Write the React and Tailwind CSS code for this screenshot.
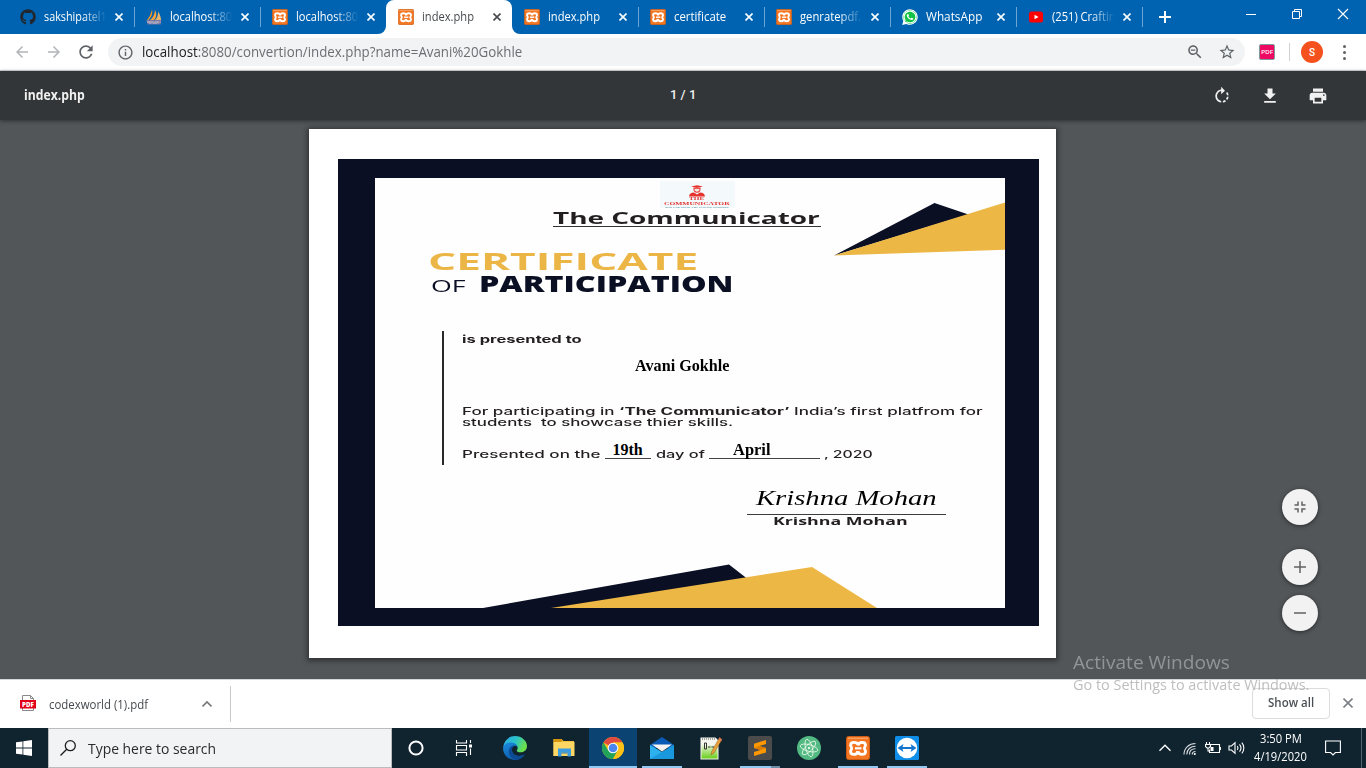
import { useLayoutEffect, useRef, useState } from "react";
import { FaGithub, FaWhatsapp } from "react-icons/fa";

/* Stretches one line of text so that it fills the width given in className. */
function Fit({ className = "", children }) {
  const outer = useRef(null);
  const inner = useRef(null);
  const [scale, setScale] = useState(1);
  useLayoutEffect(() => {
    setScale(outer.current.clientWidth / inner.current.offsetWidth);
  }, [children]);
  return (
    <span ref={outer} className={`inline-block shrink-0 whitespace-pre ${className}`}>
      <span ref={inner} className="inline-block origin-left" style={{ transform: `scaleX(${scale})` }}>
        {children}
      </span>
    </span>
  );
}

function Glyph({ d, className }) {
  return (
    <svg viewBox="0 0 24 24" className={className} fill="currentColor">
      <path d={d} />
    </svg>
  );
}

const ICONS = {
  back: "M20 11H7.83l5.59-5.59L12 4l-8 8 8 8 1.41-1.41L7.83 13H20v-2z",
  forward: "M12 4l-1.41 1.41L16.17 11H4v2h12.17l-5.58 5.59L12 20l8-8z",
  reload:
    "M17.65 6.35C16.2 4.9 14.21 4 12 4c-4.42 0-7.99 3.58-7.99 8s3.57 8 7.99 8c3.73 0 6.84-2.55 7.73-6h-2.08c-.82 2.33-3.04 4-5.65 4-3.31 0-6-2.69-6-6s2.69-6 6-6c1.66 0 3.14.69 4.22 1.78L13 11h7V4l-2.35 2.35z",
  info: "M11 17h2v-6h-2v6zm1-15C6.48 2 2 6.48 2 12s4.48 10 10 10 10-4.48 10-10S17.52 2 12 2zm0 18c-4.41 0-8-3.59-8-8s3.59-8 8-8 8 3.59 8 8-3.59 8-8 8zM11 9h2V7h-2v2z",
  zoomOut:
    "M15.5 14h-.79l-.28-.27C15.41 12.59 16 11.11 16 9.5 16 5.91 13.09 3 9.5 3S3 5.91 3 9.5 5.91 16 9.5 16c1.61 0 3.09-.59 4.23-1.57l.27.28v.79l5 4.99L20.49 19l-4.99-5zm-6 0C7.01 14 5 11.99 5 9.5S7.01 5 9.5 5 14 7.01 14 9.5 11.99 14 9.5 14zM6.5 8.7h6v1.6h-6z",
  star: "M22 9.24l-7.19-.62L12 2 9.19 8.63 2 9.24l5.46 4.73L5.82 21 12 17.27 18.18 21l-1.63-7.03L22 9.24zM12 15.4l-3.76 2.27 1-4.28-3.32-2.88 4.38-.38L12 6.1l1.71 4.04 4.38.38-3.32 2.88 1 4.28L12 15.4z",
  rotate:
    "M15.55 5.55L11 1v3.07C7.06 4.56 4 7.92 4 12s3.05 7.44 7 7.93v-2.02c-2.84-.48-5-2.94-5-5.91s2.16-5.43 5-5.91V10l4.55-4.45zM19.93 11c-.17-1.39-.72-2.73-1.62-3.89l-1.42 1.42c.54.75.88 1.6 1.02 2.47h2.02zM13 17.9v2.02c1.39-.17 2.74-.71 3.9-1.61l-1.44-1.44c-.75.54-1.59.89-2.46 1.03zm3.89-2.42l1.42 1.41c.9-1.16 1.45-2.5 1.62-3.89h-2.02c-.14.87-.48 1.72-1.02 2.48z",
  download: "M19 9h-4V3H9v6H5l7 7 7-7zM5 18v2h14v-2H5z",
  print:
    "M19 8H5c-1.66 0-3 1.34-3 3v6h4v4h12v-4h4v-6c0-1.66-1.34-3-3-3zm-3 11H8v-5h8v5zm3-7c-.55 0-1-.45-1-1s.45-1 1-1 1 .45 1 1-.45 1-1 1zm-1-9H6v4h12V3z",
};

function Xampp({ className }) {
  return (
    <svg viewBox="0 0 24 24" className={className}>
      <rect x="0.5" y="0.5" width="23" height="23" rx="2" fill="#f37623" stroke="#cf5c12" />
      <path d="M2 2.2h20" stroke="#f9b27c" strokeWidth="1" />
      <path
        d="M12.200 9.500C12 7.200 10.300 6.300 8 6.300 5.700 6.300 4.600 7.500 4.600 9.200c0 1.500 1.100 1.700 1.100 3.100s-1.100 1.700-1.100 3.200c0 1.700 1.200 2.900 3.400 2.900 2.300 0 3.400-1 3.900-3.300M12.200 9.500c.3-2.300 1.600-3.200 3.900-3.200s3.400 1.200 3.400 2.900c0 1.500-1.100 1.700-1.100 3.100s1.100 1.700 1.100 3.200c0 1.700-1.200 2.900-3.400 2.900-2.300 0-3.800-1-4.100-3.300"
        fill="none"
        stroke="#fff"
        strokeWidth="2.800"
      />
      <path d="M9 12.300h6.500" stroke="#fff" strokeWidth="2.200" />
    </svg>
  );
}

function PhpMyAdmin() {
  return (
    <svg viewBox="0 0 16 16" className="size-4 shrink-0">
      <path d="M6 .5c.7 3 .4 7-3.700 10.500L1 11C3.500 8 5 4.500 6 .5z" fill="#f8971d" />
      <path d="M9 .8c1.800 3.700 1.800 7.700-1 10.200H4C7 8.500 9 5 9 .8z" fill="#f9a13a" />
      <path d="M12 2.500c2.200 3 3 6.500 3 8.500H9c2.300-2 3.300-5.500 3-8.500z" fill="#e8b469" />
      <path d="M.5 11h15l-.8 4.500H1.500z" fill="#77769f" />
      <path d="M1 13h2m1-1v3m2-3v2.500m2-2v2.500m2-3v3m2-3v2.500m1.500-1.500h1" stroke="#e5e2ec" strokeWidth=".8" />
    </svg>
  );
}

function WhatsApp() {
  return (
    <svg viewBox="0 0 16 16" className="size-4 shrink-0">
      <path d="M8 .2a7.800 7.800 0 1 1-3.700 14.700L.2 15.900l1.100-4A7.800 7.800 0 0 1 8 .2z" fill="#fff" />
      <circle cx="8" cy="8" r="6.700" fill="#13c345" />
      <g transform="translate(8 8) scale(.92) translate(-8 -8)">
        <FaWhatsapp size={16} color="#fff" />
      </g>
    </svg>
  );
}

function YouTube() {
  return (
    <svg viewBox="0 0 16 16" className="size-4 shrink-0">
      <rect x="1" y="2.500" width="14" height="11" rx="2.500" fill="#f00" />
      <path d="M6.500 5.700v4.600l4-2.300z" fill="#fff" />
    </svg>
  );
}

function CloseX({ className }) {
  return (
    <svg viewBox="0 0 8 8" className={className}>
      <path d="M.5.5l7 7M7.500.5l-7 7" stroke="currentColor" strokeWidth="1.600" />
    </svg>
  );
}

const tabXampp = <Xampp className="size-4 shrink-0" />;

const TABS = [
  {
    icon: <FaGithub className="size-4 shrink-0 text-[#20272e]" />,
    title: "sakshipatel1",
    w: "w-[63px]",
    fade: true,
    sep: true,
  },
  { icon: <PhpMyAdmin />, title: "localhost:80", w: "w-[62px]", fade: true, sep: true },
  { icon: tabXampp, title: "localhost:80", w: "w-[62px]", fade: true },
  { icon: tabXampp, title: "index.php", w: "w-[52px]", active: true },
  { icon: tabXampp, title: "index.php", w: "w-[52px]", sep: true },
  { icon: tabXampp, title: "certificate", w: "w-[52px]", sep: true },
  { icon: tabXampp, title: "genratepdf.", w: "w-[61px]", fade: true, sep: true },
  { icon: <WhatsApp />, title: "WhatsApp", w: "w-[56px]", sep: true },
  { icon: <YouTube />, title: "(251) Craftin", w: "w-[64px]", fade: true, sep: true },
];

function Tab({ tab }) {
  return (
    <div
      className={`relative flex h-[34px] w-[126px] shrink-0 items-center pl-3 ${
        tab.active ? "z-10 rounded-t-lg bg-white text-[#45494d]" : "text-white"
      }`}
    >
      {tab.active && (
        <>
          <svg viewBox="0 0 8 8" className="absolute bottom-0 -left-2 size-2" fill="#fff">
            <path d="M8 0v8H0a8 8 0 0 0 8-8z" />
          </svg>
          <svg viewBox="0 0 8 8" className="absolute -right-2 bottom-0 size-2" fill="#fff">
            <path d="M0 0v8h8a8 8 0 0 1-8-8z" />
          </svg>
        </>
      )}
      {tab.icon}
      <span
        className={`ml-2 w-16 shrink-0 overflow-hidden text-[12px] leading-[18px] ${
          tab.fade ? "mask-r-from-60% mask-r-to-98%" : ""
        }`}
      >
        <Fit className={tab.w}>{tab.title}</Fit>
      </span>
      <CloseX className="ml-[7px] size-2 shrink-0" />
      {tab.sep && <span className="ml-[11px] h-5 w-px shrink-0 bg-[#6ba5d5]" />}
    </div>
  );
}

function TabStrip() {
  return (
    <div className="flex h-[34px] bg-[#0063b1] pl-2 text-white">
      {TABS.map((tab, i) => (
        <Tab key={i} tab={tab} />
      ))}
      <div className="flex flex-1 items-center">
        <svg viewBox="0 0 12 12" className="ml-[17px] size-3">
          <path d="M6 0v12M0 6h12" stroke="#fff" strokeWidth="2" />
        </svg>
        <svg viewBox="0 0 12 12" className="mb-1.5 ml-[74px] size-3">
          <path d="M1 6.500h10" stroke="#fff" />
        </svg>
        <svg viewBox="0 0 12 12" className="mb-1.5 ml-[34px] size-3" fill="none" stroke="#fff">
          <path d="M1.500 3.500h7v7h-7zM3.500 3.500v-2h7v7h-2" />
        </svg>
        <svg viewBox="0 0 12 12" className="mb-1.5 ml-[34px] size-3">
          <path d="M1 1l10 10M11 1L1 11" stroke="#fff" strokeWidth="1.100" />
        </svg>
      </div>
    </div>
  );
}

function AddressBar() {
  return (
    <div className="flex h-[37px] items-center border-b border-[#d5d7da] bg-white text-[#5f6368]">
      <Glyph d={ICONS.back} className="ml-[13px] size-[18px] text-[#b2b4b7]" />
      <Glyph d={ICONS.forward} className="ml-[14px] size-[18px] text-[#b2b4b7]" />
      <Glyph d={ICONS.reload} className="ml-[13px] size-5" />
      <div className="ml-3 flex h-7 w-[1137px] items-center rounded-full bg-[#f1f3f4] pl-[9px]">
        <Glyph d={ICONS.info} className="size-[17px]" />
        <Fit className="ml-2 w-[380px] text-[14px] leading-5 text-[#6b6f73]">
          <span className="text-[#202124]">localhost</span>:8080/convertion/index.php?name=Avani%20Gokhle
        </Fit>
        <span className="flex-1" />
        <Glyph d={ICONS.zoomOut} className="mr-[14px] size-[18px]" />
        <Glyph d={ICONS.star} className="mr-[9px] size-[18px]" />
      </div>
      <div className="ml-[14px] flex size-4 items-center justify-center overflow-hidden rounded-[2px] border border-[#7f9ba0] bg-[#ee0a63] text-[6px] leading-none font-semibold text-white">
        <Fit className="w-3">PDF</Fit>
      </div>
      <span className="ml-[14px] h-[18px] w-px bg-[#cfd1d4]" />
      <span className="ml-[11px] flex size-[22px] items-center justify-center rounded-full bg-[#f4511e] font-['Roboto'] text-[10px] font-medium text-white">
        S
      </span>
      <span className="ml-5 flex flex-col gap-[3px]">
        <i className="size-[3px] rounded-full bg-[#5f6368]" />
        <i className="size-[3px] rounded-full bg-[#5f6368]" />
        <i className="size-[3px] rounded-full bg-[#5f6368]" />
      </span>
    </div>
  );
}

function PdfToolbar() {
  return (
    <div className="relative z-10 grid h-[49px] grid-cols-3 items-center bg-[#323639] text-[#f1f1f1] shadow-[0_1px_4px_rgba(0,0,0,0.45)]">
      <Fit className="mb-0.5 ml-6 w-[61px] text-[14px] leading-5 font-bold">index.php</Fit>
      <Fit className="mb-0.5 w-[26px] justify-self-center font-['Roboto'] text-[13px] leading-5 font-medium">1 / 1</Fit>
      <div className="flex justify-end gap-7 pr-[38px]">
        <Glyph d={ICONS.rotate} className="size-5" />
        <Glyph d={ICONS.download} className="size-5" />
        <Glyph d={ICONS.print} className="size-5" />
      </div>
    </div>
  );
}

function CertificateLogo() {
  return (
    <div className="flex h-[27px] w-[75px] flex-col items-center bg-[#f4f9fc] pt-1 leading-none font-bold text-[#e0342f]">
      <svg viewBox="0 0 18 12" className="h-3 w-[18px] shrink-0" fill="#e6332d">
        <path d="M3 1.500L9 .2l6 1.300-6 1.300z" />
        <path d="M5.500 2.500h7v2c0 2-1.500 3.300-3.500 3.300S5.500 6.500 5.500 4.500z" />
        <path d="M6.500 3.800h5v.8c0 1.300-1 2.200-2.500 2.200S6.500 5.900 6.500 4.600z" fill="#fbe4e0" />
        <path d="M1 11.500c.3-2.700 2-3.800 5-4l3 2 3-2c3 .2 4.700 1.300 5 4z" />
      </svg>
      <Fit className="h-[4.500px] w-4 font-['Liberation_Serif'] text-[4.500px] leading-[4.500px]">THE</Fit>
      <Fit className="h-[4.500px] w-[66px] font-['Liberation_Serif'] text-[5px] leading-[4.500px]">COMMUNICATOR</Fit>
      <Fit className="h-[2px] w-[64px] text-[2.500px] leading-[2px] font-normal text-[#4f8f99]">
        The Platform For Future Leaders
      </Fit>
    </div>
  );
}

function Certificate() {
  return (
    <div className="mr-0.5 h-[529px] w-[747px] bg-white pt-[30px] pl-[29px] shadow-[0_1px_5px_2px_rgba(0,0,0,0.4)]">
      <div className="relative h-[467px] w-[701px] bg-[#0a0f24] pt-[19px] pl-[37px]">
        <div className="h-[430px] w-[630px] bg-[#fefefe]" />
        <svg viewBox="338 159 701 467" className="absolute inset-0 h-[467px] w-[701px]">
          <path d="M834 255.500L934.500 203l34 11.500z" fill="#0a0f24" />
          <path d="M834 255.500L1005 202.500v47.300z" fill="#edb745" />
          <path d="M483 608l246-43.500 18 14L600 608z" fill="#0a0f24" />
          <path d="M551 608l261-41 65 41z" fill="#edb745" />
        </svg>
        <div className="absolute top-[19px] left-[37px] flex h-[430px] w-[630px] flex-col pt-[3px] text-[#231f20]">
          <div className="ml-[285px] flex">
            <CertificateLogo />
          </div>
          <div className="ml-[178px] flex h-[19px] w-[268px] border-b border-[#333]">
            <Fit className="w-[267px] text-[16px] leading-[20px] font-bold">The Communicator</Fit>
          </div>
          <Fit className="mt-[23px] ml-[53px] h-[22px] w-[271px] text-[22.500px] leading-[23px] font-bold text-[#ecb646]">
            CERTIFICATE
          </Fit>
          <div className="ml-[56px] flex h-[22px] items-baseline leading-[22px] text-[#0a0f24]">
            <Fit className="w-[34px] text-[16.500px] font-medium">OF</Fit>
            <Fit className="ml-[14px] w-[255px] text-[23.500px] font-extrabold">PARTICIPATION</Fit>
          </div>
          <div className="mt-[37px] ml-[67px] flex h-[134px] flex-col border-l-2 border-[#2b2829] pt-[2px] pl-[18px] font-[Inter] text-[10px] leading-[13px] font-medium">
            <Fit className="h-3 w-[119px] font-bold">is presented to</Fit>
            <Fit className="mt-3 ml-[173px] h-[18px] w-[95px] font-['Liberation_Serif'] text-[16px] leading-[18px] font-bold text-black">
              Avani Gokhle
            </Fit>
            <Fit className="mt-[30px] h-[11px] w-[521px] leading-[12px]">
              For participating in <b>‘The Communicator’</b> India’s first platfrom for
            </Fit>
            <Fit className="h-[12px] w-[271px] leading-[13px]">{"students  to showcase thier skills."}</Fit>
            <div className="mt-[18px] flex items-end leading-3">
              <Fit className="-mb-px w-[138px]">Presented on the</Fit>
              <span className="ml-[5px] flex h-[13px] w-[46px] items-end justify-center border-b border-[#444] font-['Liberation_Serif'] text-[16px] leading-4 font-bold text-black">
                <Fit className="w-[30px]">19th</Fit>
              </span>
              <Fit className="-mb-px ml-[5px] w-[49px]">day of</Fit>
              <span className="ml-[4px] flex h-[13px] w-[111px] items-end border-b border-[#444] pl-6 font-['Liberation_Serif'] text-[16px] leading-4 font-bold text-black">
                <Fit className="w-[37px]">April</Fit>
              </span>
              <Fit className="-mb-px ml-1 w-[49px]">, 2020</Fit>
            </div>
          </div>
          <div className="mt-[19px] ml-[372px] flex w-[199px] flex-col">
            <div className="flex h-[31px] w-[199px] justify-center border-b border-[#3c3c3c]">
              <Fit className="w-[180px] font-['Z003','URW_Chancery_L','Liberation_Serif',cursive] text-[21px] leading-[28px] text-black italic">
                Krishna Mohan
              </Fit>
            </div>
            <Fit className="ml-[26px] w-[135px] text-[10px] leading-[13px] font-bold">Krishna Mohan</Fit>
          </div>
        </div>
      </div>
    </div>
  );
}

function RoundButton({ className = "", d }) {
  return (
    <span
      className={`flex size-9 items-center justify-center rounded-full bg-[#f2f2f2] shadow-[0_1px_4px_rgba(0,0,0,0.5)] ${className}`}
    >
      <svg viewBox="0 0 12 12" className="size-3" fill="none" stroke="#616161" strokeWidth="1.500">
        <path d={d} />
      </svg>
    </span>
  );
}

function Viewer() {
  return (
    <div className="relative flex h-[559px] justify-center bg-[#525659] pt-[9px]">
      <Certificate />
      <div className="absolute top-[369px] right-12 flex flex-col">
        <RoundButton d="M4 .5V4H.5M8 .5V4h3.500M4 11.500V8H.5M8 11.500V8h3.500" />
        <RoundButton className="mt-6" d="M6 0v12M0 6h12" />
        <RoundButton className="mt-[10px]" d="M0 6h12" />
      </div>
      <div className="absolute top-[530px] left-[1073px] z-20 flex flex-col text-[#a8a8a8]/75">
        <Fit className="w-[157px] text-[19px] leading-6">Activate Windows</Fit>
        <Fit className="w-[236px] text-[14px] leading-[22px]">Go to Settings to activate Windows.</Fit>
      </div>
    </div>
  );
}

function DownloadBar() {
  return (
    <div className="flex h-[49px] items-center border-t border-[#d5d7da] bg-white">
      <svg viewBox="0 0 16 16" className="mb-0.5 ml-5 size-4">
        <path d="M2.500 15.500V.5h8l3 3v12z" fill="#fff" stroke="#8b8b8b" />
        <path d="M10.500.5v3h3" fill="none" stroke="#8b8b8b" />
        <rect x="0" y="5" width="16" height="8.500" fill="#e2001a" />
        <text x="8" y="11.600" textAnchor="middle" fill="#fff" fontSize="6.200" fontWeight="800" fontFamily="Open Sans">
          PDF
        </text>
      </svg>
      <Fit className="mt-0.5 ml-[13px] w-[99px] text-[12px] leading-4 text-[#45494d]">codexworld (1).pdf</Fit>
      <svg viewBox="0 0 10 10" className="ml-[54px] size-[10px]" fill="none" stroke="#75797d" strokeWidth="1.600">
        <path d="M.5 7.500L5 3l4.500 4.500" />
      </svg>
      <span className="ml-[18px] h-9 w-px bg-[#c6c8ca]" />
      <span className="flex-1" />
      <button className="mb-0.5 flex h-[31px] w-[78px] items-center justify-center rounded-[4px] border border-[#dadce0] text-[12px] leading-4 font-semibold text-[#4b5054]">
        <Fit className="w-[46px]">Show all</Fit>
      </button>
      <svg viewBox="0 0 10 10" className="mr-[13px] mb-0.5 ml-[13px] size-[10px]" stroke="#7d8185" strokeWidth="1.600">
        <path d="M.5.5l9 9M9.500.5l-9 9" />
      </svg>
    </div>
  );
}

const EdgeIcon = (
  <svg viewBox="0 0 24 24" className="size-6">
    <defs>
      <linearGradient id="edgeTop" x1="0" y1="0" x2="1" y2="0.400">
        <stop offset="0" stopColor="#2aa8e8" />
        <stop offset="0.550" stopColor="#2cc3c9" />
        <stop offset="1" stopColor="#6be04a" />
      </linearGradient>
      <linearGradient id="edgeLow" x1="0" y1="0" x2="0.600" y2="1">
        <stop offset="0" stopColor="#1b8be0" />
        <stop offset="1" stopColor="#0c59a4" />
      </linearGradient>
    </defs>
    <path d="M.3 11C1 4.500 6 0 12 0c7 0 12 5 12 10 0 4-3 6.300-6.500 6.300-3 0-4.500-1-3.500-2.300 1.500-2 .5-6-4-6C5.500 8 1.500 9 .3 11z" fill="url(#edgeTop)" />
    <path d="M.1 12C.5 8.500 4.500 6.300 8.500 6.500c3.500.2 6 2.300 6 5-.5-1.500-2-2.200-3.300-1.700C8.700 11 8.300 14 9.500 16.500c1.800 3.600 7.500 4.500 12.300 2C19.500 22 16 24 12 24 5 24-.2 18.500.1 12z" fill="url(#edgeLow)" />
    <path d="M11.200 9.800C8.700 11 8.300 14 9.500 16.500c1.800 3.600 7.500 4.500 12.300 2-2 3-5 4.900-8 5.300C8 23 5.500 18.500 6 14.500c.3-2.600 2.500-5 5.200-4.700z" fill="#0d4a94" />
  </svg>
);

const ExplorerIcon = (
  <svg viewBox="0 0 24 24" className="size-6">
    <path d="M1.500 3h8l2 2H22v15H1.500z" fill="#f5c141" />
    <path d="M1.500 3h8l1 1.300-1 1.700h-8z" fill="#d8960c" />
    <path d="M1.500 6h21v14h-21z" fill="#fdd663" />
    <path d="M6 20.500V12.500h13v8h-3.500v-4h-6v4z" fill="#3d9be0" />
    <path d="M9.500 16.500h6v1h-6z" fill="#1e75bd" />
  </svg>
);

const ChromeIcon = (
  <svg viewBox="0 0 24 24" className="size-6">
    <circle cx="12" cy="12" r="11" fill="#fbc116" />
    <path d="M12 12L2.470 6.500A11 11 0 0 1 21.530 6.500H12z" fill="#e04a3f" />
    <path d="M2.470 6.500A11 11 0 0 0 12 23l4.600-8.300L12 12 7.400 14.700z" fill="#22a35a" />
    <path d="M21.530 6.500A11 11 0 0 1 12 23l4.700-8.200L12 6.500z" fill="#fbc116" />
    <circle cx="12" cy="12" r="5.300" fill="#fff" />
    <circle cx="12" cy="12" r="4.300" fill="#4a86ee" />
  </svg>
);

const MailIcon = (
  <svg viewBox="0 0 24 24" className="size-6">
    <path d="M0 9L12 1l12 8v3H0z" fill="#0a5bb5" />
    <path d="M0 9l12 7 12-7v14H0z" fill="#2cb0ee" />
    <path d="M0 23L24 9v14z" fill="#1a98de" />
    <path d="M2 8.500h20L12 15.500z" fill="#f4f4f4" />
  </svg>
);

const NotepadIcon = (
  <svg viewBox="0 0 24 24" className="size-6">
    <defs>
      <linearGradient id="npp" x1="0" y1="0" x2="0" y2="1">
        <stop offset="0" stopColor="#e9f4d8" />
        <stop offset="1" stopColor="#69cf1b" />
      </linearGradient>
    </defs>
    <path d="M1.500 1.500h15l3 3v19h-18z" fill="#f3f5ee" />
    <path d="M2.500 9h16v13.500h-16z" fill="url(#npp)" />
    <path d="M3 3h14" stroke="#8a8a8a" strokeWidth="1.500" strokeDasharray="1 1" />
    <path d="M5.500 7H7.500v6H5.500zM9 11h2.500m1 0h2.500" fill="none" stroke="#333" />
    <path d="M20.500 1.500l2.500 2L15 17l-3 2 .7-3.500z" fill="#e9a23b" stroke="#8a5a1d" strokeWidth=".5" />
    <path d="M20.500 1.500l2.500 2-1 1.600-2.500-2z" fill="#df6d5b" />
  </svg>
);

const SublimeIcon = (
  <svg viewBox="0 0 24 24" className="size-6">
    <rect width="24" height="24" rx="2" fill="#4b4b4b" />
    <path d="M18 4v4L11.500 10l6.500 2v4.500L6 20v-4l6.500-2L6 12V7.700z" fill="#ff9800" />
    <path d="M6 12l6.500 2L18 12.200V12l-6.500-2z" fill="#d97c00" />
  </svg>
);

const AtomIcon = (
  <svg viewBox="0 0 24 24" className="size-6">
    <circle cx="12" cy="12" r="12" fill="#51b981" />
    <g fill="none" stroke="#e4f7e6" strokeWidth=".9">
      <ellipse cx="12" cy="12" rx="9" ry="3.300" transform="rotate(15 12 12)" />
      <ellipse cx="12" cy="12" rx="9" ry="3.300" transform="rotate(75 12 12)" />
      <ellipse cx="12" cy="12" rx="9" ry="3.300" transform="rotate(135 12 12)" />
    </g>
    <circle cx="12" cy="12" r="1.300" fill="#e4f7e6" />
  </svg>
);

const TeamViewerIcon = (
  <svg viewBox="0 0 24 24" className="size-6">
    <rect width="24" height="24" rx="1.500" fill="#0e8ee9" />
    <circle cx="12" cy="12" r="10.300" fill="#fff" />
    <path d="M2.500 12l6-4-1 3h9l-1-3 6 4-6 4 1-3h-9l1 3z" fill="#1574cc" />
  </svg>
);

const CortanaIcon = (
  <svg viewBox="0 0 24 24" className="size-6">
    <circle cx="12" cy="12" r="6.600" fill="none" stroke="#fff" strokeWidth="2" />
  </svg>
);

const TaskViewIcon = (
  <svg viewBox="0 0 24 24" className="size-6" fill="none" stroke="#fff" strokeWidth="1.100">
    <path d="M4.500 4v3h10V4M4.500 20v-3.500h10V20M4.500 9.500h10V14h-10zM18.500 4v3M18.500 12.500V19" />
    <path d="M17 8.500h3v3h-3z" fill="#fff" stroke="none" />
  </svg>
);

const APPS = [
  { icon: EdgeIcon, gap: "ml-[3px]" },
  { icon: ExplorerIcon, gap: "ml-px" },
  { icon: ChromeIcon, gap: "ml-px", cell: "bg-[#0b4372]", bar: "w-12" },
  { icon: MailIcon, gap: "ml-px", bar: "w-10" },
  { icon: NotepadIcon, gap: "ml-px" },
  { icon: SublimeIcon, gap: "ml-px", bar: "w-10 border-r-9 border-[#6f8ea6]" },
  { icon: AtomIcon, gap: "ml-px" },
  { icon: <Xampp className="size-6" />, gap: "ml-px", bar: "w-10" },
  { icon: TeamViewerIcon, gap: "ml-px", bar: "w-10" },
];

function Taskbar() {
  return (
    <div className="flex h-10 bg-[#102430] text-white">
      <div className="flex w-12 items-center justify-center">
        <svg viewBox="0 0 16 16" className="size-4" fill="#fff">
          <path d="M0 2.300l6.500-.9v6.200H0zM7.300 1.300L16 0v7.600H7.300zM0 8.400h6.500v6.200L0 13.700zM7.300 8.400H16V16l-8.700-1.300z" />
        </svg>
      </div>
      <div className="flex w-[344px] items-center border border-[#b9bbbd] bg-[#f2f3f5] text-[#2b2b2b]">
        <svg viewBox="0 0 16 16" className="ml-[11px] size-4" fill="none" stroke="#1d1d1d" strokeWidth="1.300">
          <circle cx="10.300" cy="5.700" r="5" />
          <path d="M6.700 9.300L.5 15.500" />
        </svg>
        <Fit className="ml-3 w-[128px] text-[15px] leading-5">Type here to search</Fit>
      </div>
      <div className="flex w-12 items-center justify-center">{CortanaIcon}</div>
      <div className="flex w-12 items-center justify-center">{TaskViewIcon}</div>
      {APPS.map((app, i) => (
        <div key={i} className={`flex w-12 flex-col items-center justify-end ${app.gap} ${app.cell || ""}`}>
          {app.icon}
          <span className={`mt-1.5 h-0.5 ${app.bar ? `bg-[#90c8f2] ${app.bar}` : "w-0"}`} />
        </div>
      ))}
      <div className="flex flex-1 items-center justify-end">
        <svg viewBox="0 0 12 12" className="size-3" fill="none" stroke="#fff" strokeWidth="1.300">
          <path d="M.5 8.700L6 3.200l5.500 5.500" />
        </svg>
        <svg viewBox="0 0 14 14" className="mt-0.5 ml-3 size-[14px]" fill="none" stroke="#d8dde0" strokeWidth="1.100">
          <path d="M1 12.500C1 6 6 1.500 12.500 1.500M3.800 12.500c0-5 3.700-8.300 8.700-8.300M6.500 12.500c0-3.500 2.500-5.700 6-5.700M9.200 12.500c0-1.800 1.300-3 3.300-3" />
          <circle cx="11.800" cy="12" r="1.100" fill="#fff" stroke="none" />
        </svg>
        <svg viewBox="0 0 16 14" className="ml-2 h-[14px] w-4" fill="none" stroke="#fff" strokeWidth="1.100">
          <path d="M6 3.500h8.500v8H4.500V8.500M15.400 6v3" />
          <path d="M1.500 1v2.500M4.500 1v2.500M.5 3.500h5v2L4 7H2L.5 5.500zM3 7v3h1" />
          <path d="M5.500 6h3v4h-3z" fill="#fff" stroke="none" />
        </svg>
        <svg viewBox="0 0 18 14" className="ml-[7px] h-[14px] w-[18px]" fill="none" stroke="#fff" strokeWidth="1.100">
          <path d="M1 5h2.500L7 1.700v10.600L3.500 9H1z" />
          <path d="M9.300 5c.9 1.200.9 2.800 0 4M11.500 3.300c1.800 2.200 1.800 5.200 0 7.400M13.800 1.700c2.700 3 2.700 7.600 0 10.600" />
        </svg>
        <div className="ml-2 flex w-[53px] flex-col items-center text-[12px] leading-[18px]">
          <Fit className="w-[42px]">3:50 PM</Fit>
          <Fit className="w-[53px]">4/19/2020</Fit>
        </div>
        <svg viewBox="0 0 16 16" className="ml-[18px] size-4" fill="none" stroke="#fff" strokeWidth="1.100">
          <path d="M.6 1h14.800v11.500h-5L8 15l-2.400-2.500h-5z" />
        </svg>
        <span className="mr-1 ml-5 h-10 w-px bg-[#536470]" />
      </div>
    </div>
  );
}

export default function App() {
  return (
    <div className="flex h-[768px] w-[1366px] flex-col overflow-hidden font-['Open_Sans','Noto_Sans',sans-serif]">
      <TabStrip />
      <AddressBar />
      <PdfToolbar />
      <Viewer />
      <DownloadBar />
      <Taskbar />
    </div>
  );
}
